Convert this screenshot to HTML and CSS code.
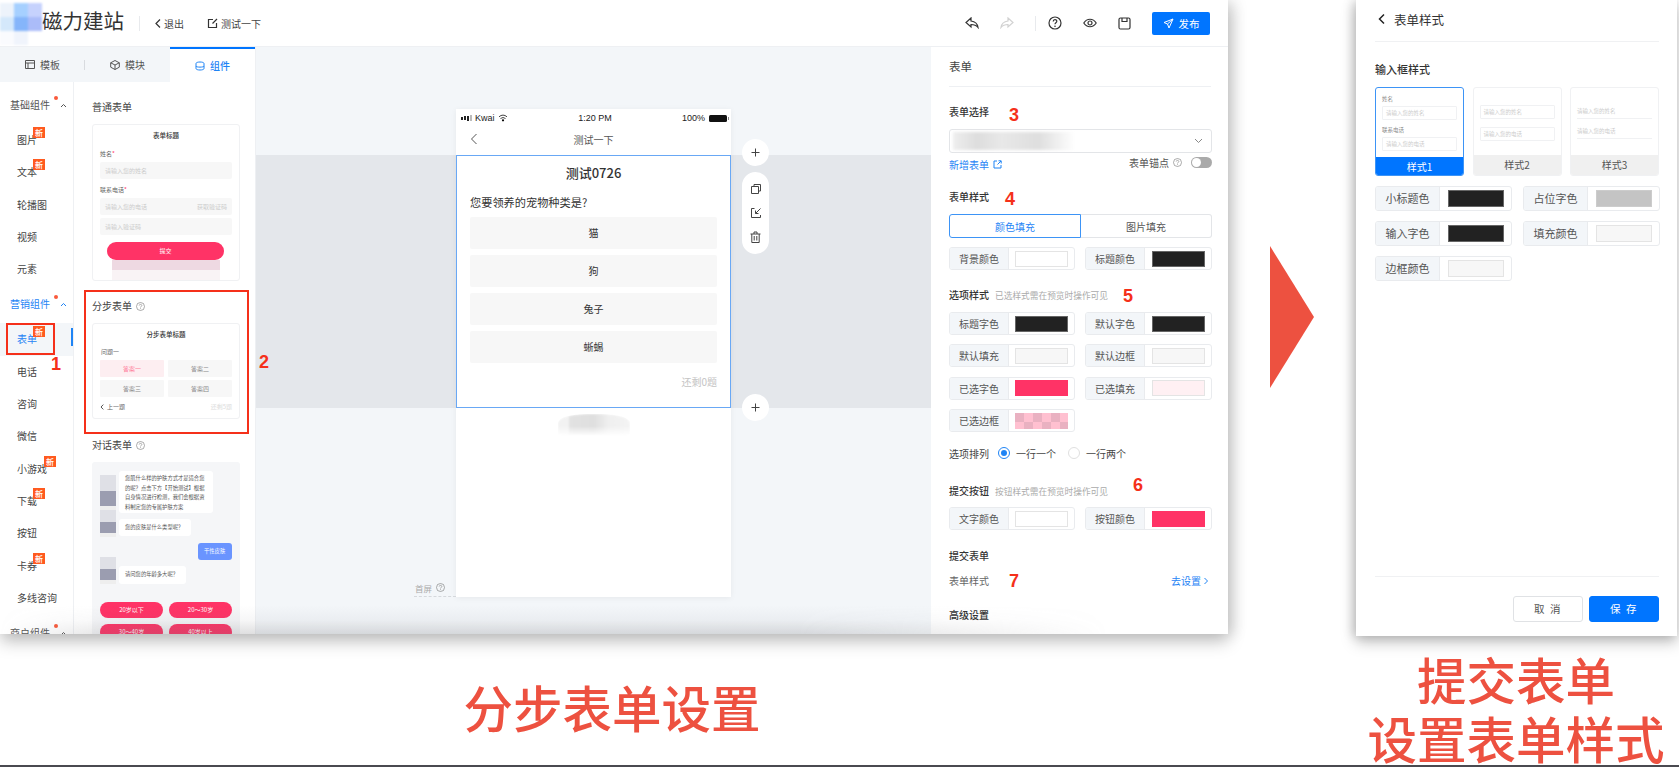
FILE: index.html
```html
<!DOCTYPE html>
<html lang="zh-CN">
<head>
<meta charset="utf-8">
<title>磁力建站</title>
<link rel="stylesheet" href="styles.css">
</head>
<body>
<div class="page">
  <section class="window editor">
    <header class="topbar">
      <div class="logo"><i></i><i></i><i></i><i></i><i></i><i></i><i></i><i></i><i></i></div>
      <span class="brand">磁力建站</span>
      <span class="top-divider"></span>
      <span class="top-link"><svg width="8" height="11" viewBox="0 0 8 11"><path d="M6 1.500 2 5.500l4 4" class="ln"/></svg>退出</span>
      <span class="top-link second"><svg width="11" height="11" viewBox="0 0 11 11"><path d="M6 1.500H1.500v8h8V5M5.500 5.500 10 1" class="ln"/></svg>测试一下</span>
      <div class="top-actions">
        <svg class="act" width="14" height="12" viewBox="0 0 14 12"><path d="M6 1 1 5.500 6 10V7.500c3 0 5 .5 7 3-.5-4-3-6-7-6.500z" class="ln"/></svg>
        <svg class="act faded" width="14" height="12" viewBox="0 0 14 12"><path d="M8 1l5 4.500L8 10V7.500c-3 0-5 .5-7 3 .5-4 3-6 7-6.500z" class="ln"/></svg>
        <span class="top-divider act-div"></span>
        <svg class="act" width="14" height="14" viewBox="0 0 14 14"><circle cx="7" cy="7" r="6" class="ln"/><path d="M5.200 5.500C5.200 3 8.800 3 8.800 5.300 8.800 6.800 7 6.800 7 8.300" class="ln"/><circle cx="7" cy="10.300" r=".8" fill="#333"/></svg>
        <svg class="act" width="14" height="10" viewBox="0 0 14 10"><path d="M.8 5C4 0 10 0 13.200 5 10 10 4 10 .8 5z" class="ln"/><circle cx="7" cy="5" r="2" class="ln"/></svg>
        <svg class="act" width="13" height="13" viewBox="0 0 13 13"><path d="M1 2.500Q1 1 2.500 1h8Q12 1 12 2.500v8q0 1.500-1.500 1.500h-8Q1 12 1 10.500zM4 1v3.500h5V1" class="ln"/></svg>
        <span class="publish"><svg width="11" height="11" viewBox="0 0 11 11"><path d="M10 1 1 4.500l3.500 1.500L6 10zM4.500 6 10 1" class="ln-w"/></svg>发布</span>
      </div>
    </header>
    <div class="editor-body">
      <aside class="library">
        <div class="tabs">
          <div class="tab"><svg width="10" height="9" viewBox="0 0 10 9"><path d="M.5.500h9v8h-9zM.5 3h9M3 3v5.500" class="ln-thin"/></svg>模板<span class="tab-sep"></span></div>
          <div class="tab"><svg width="10" height="10" viewBox="0 0 10 10"><path d="M5 .5 9.300 2.800v4.400L5 9.500.7 7.200V2.800zM.7 2.800 5 5l4.300-2.200M5 5v4.500" class="ln-thin"/></svg>模块</div>
          <div class="tab active"><svg width="10" height="10" viewBox="0 0 10 10"><path d="M1 2.500C1 .5 9 .5 9 2.500v5c0 2-8 2-8 0zM1 5c0 1.500 8 1.500 8 0" class="ln-blue"/></svg>组件</div>
        </div>
        <div class="library-body">
          <nav class="sidenav">
            <div class="nav-head">基础组件<i class="dot"></i><svg class="chev" width="7" height="5" viewBox="0 0 7 5"><path d="M1 4l2.500-2.500L6 4" class="ln-thin"/></svg></div>
            <div class="nav-item">图片<b class="new">新</b></div>
            <div class="nav-item">文本<b class="new">新</b></div>
            <div class="nav-item">轮播图</div>
            <div class="nav-item">视频</div>
            <div class="nav-item">元素</div>
            <div class="nav-head blue">营销组件<i class="dot"></i><svg class="chev" width="7" height="5" viewBox="0 0 7 5"><path d="M1 4l2.500-2.500L6 4" class="ln-blue"/></svg></div>
            <div class="nav-item current">表单<b class="new">新</b></div>
            <div class="nav-item">电话</div>
            <div class="nav-item">咨询</div>
            <div class="nav-item">微信</div>
            <div class="nav-item">小游戏<b class="new far">新</b></div>
            <div class="nav-item">下载<b class="new">新</b></div>
            <div class="nav-item">按钮</div>
            <div class="nav-item">卡券<b class="new">新</b></div>
            <div class="nav-item">多线咨询</div>
            <div class="nav-head last">商户组件<i class="dot"></i><svg class="chev" width="7" height="5" viewBox="0 0 7 5"><path d="M1 4l2.500-2.500L6 4" class="ln-thin"/></svg></div>
          </nav>
          <div class="gallery">
            <h4 class="g-title">普通表单</h4>
            <div class="tpl tpl-plain">
              <div class="tpl-head">表单标题</div>
              <div class="t-label">姓名<em>*</em></div>
              <div class="t-input">请输入您的姓名</div>
              <div class="t-label second">联系电话<em>*</em></div>
              <div class="t-input split"><span>请输入您的电话</span><span>获取验证码</span></div>
              <div class="t-input third">请输入验证码</div>
              <div class="t-submit">提交</div>
              <div class="t-blur"></div>
            </div>
            <h4 class="g-title gap">分步表单<svg class="q" width="9" height="9" viewBox="0 0 9 9"><circle cx="4.500" cy="4.500" r="4" class="ln-q"/><path d="M3.200 3.500c0-1.500 2.600-1.500 2.600 0C5.800 4.500 4.500 4.500 4.500 5.500M4.500 6.300v.8" class="ln-q"/></svg></h4>
            <div class="tpl tpl-step">
              <div class="tpl-head">分步表单标题</div>
              <div class="t-label q1">问题一</div>
              <div class="answers">
                <span class="ans on">答案一</span><span class="ans">答案二</span><span class="ans">答案三</span><span class="ans">答案四</span>
              </div>
              <div class="step-foot"><span class="prev"><svg width="4" height="6" viewBox="0 0 4 6"><path d="M3.300 .6 1 3l2.300 2.400" class="ln-thin"/></svg>上一题</span><span class="rest">还剩5题</span></div>
            </div>
            <h4 class="g-title gap2">对话表单<svg class="q" width="9" height="9" viewBox="0 0 9 9"><circle cx="4.500" cy="4.500" r="4" class="ln-q"/><path d="M3.200 3.500c0-1.500 2.600-1.500 2.600 0C5.800 4.500 4.500 4.500 4.500 5.500M4.500 6.300v.8" class="ln-q"/></svg></h4>
            <div class="tpl tpl-chat">
              <div class="chat-row"><i class="ava tall"></i><p class="bubble">您肌什么样的护肤方式才是适合您的呢？点击下方【开始测试】根据自身情况进行检测，我们会根据资料制定您的专属护肤方案</p></div>
              <div class="chat-row r2"><i class="ava"></i><p class="bubble">您的皮肤是什么类型呢？</p></div>
              <div class="chat-row me"><p class="bubble blue-b">干性皮肤</p></div>
              <div class="chat-row r3"><i class="ava"></i><p class="bubble">请问您的年龄多大呢？</p></div>
              <div class="chat-opts"><span>20岁以下</span><span>20～30岁</span><span>30～40岁</span><span>40岁以上</span></div>
            </div>
          </div>
        </div>
      </aside>
      <main class="canvas">
        <div class="phone">
          <div class="status"><span class="st-left"><i class="sig s1"></i><i class="sig s2"></i><i class="sig s3"></i><i class="sig s4"></i><span class="kwai">Kwai</span><svg width="10" height="8" viewBox="0 0 10 8"><path d="M1 2.800Q5-.6 9 2.800M2.500 4.500Q5 2.500 7.500 4.500" class="ln-k"/><circle cx="5" cy="6.300" r="1.100"/></svg></span><span class="st-mid">1:20 PM</span><span class="st-right">100%<i class="batt"></i></span></div>
          <div class="phone-nav"><svg width="8" height="12" viewBox="0 0 8 12"><path d="M6.500 1 1.500 6l5 5" class="ln-thin"/></svg><span>测试一下</span></div>
          <div class="module">
            <div class="m-title">测试0726</div>
            <div class="m-q">您要领养的宠物种类是?</div>
            <div class="m-opt">猫</div>
            <div class="m-opt">狗</div>
            <div class="m-opt">兔子</div>
            <div class="m-opt">蜥蜴</div>
            <div class="m-rest">还剩0题</div>
          </div>
          <div class="foot-blur"></div>
          <span class="fold">首屏<svg width="9" height="9" viewBox="0 0 9 9"><circle cx="4.500" cy="4.500" r="4" class="ln-q"/><path d="M3.200 3.500c0-1.500 2.600-1.500 2.600 0C5.800 4.500 4.500 4.500 4.500 5.500M4.500 6.300v.8" class="ln-q"/></svg></span>
          <span class="round plus-a"><svg width="9" height="9" viewBox="0 0 9 9"><path d="M4.500.5v8M.5 4.500h8" class="ln-k"/></svg></span>
          <div class="tools">
            <svg width="12" height="12" viewBox="0 0 12 12"><path d="M4 3V1.500h6.500V8H9M1.500 3.500H8.500V10.500H1.500z" class="ln-k"/></svg>
            <svg width="12" height="12" viewBox="0 0 12 12"><path d="M4.500 1.500H1.500v9h9V8M10.500 1.500 5.500 6.500M5.500 3.500v3h3" class="ln-k"/></svg>
            <svg width="11" height="12" viewBox="0 0 11 12"><path d="M.5 3h10M4 3V1h3v2M1.800 3v8.500h7.400V3M4.200 5v4.500M6.800 5v4.500" class="ln-k"/></svg>
          </div>
          <span class="round plus-b"><svg width="9" height="9" viewBox="0 0 9 9"><path d="M4.500.5v8M.5 4.500h8" class="ln-k"/></svg></span>
        </div>
      </main>
      <aside class="props">
        <h3 class="p-title">表单</h3>
        <h4 class="p-h h-a">表单选择</h4>
        <div class="select"><i class="sel-blur"></i><svg width="9" height="6" viewBox="0 0 9 6"><path d="M1 1l3.500 3.500L8 1" class="ln-gray"/></svg></div>
        <div class="sel-foot">
          <span class="link">新增表单<svg width="9" height="9" viewBox="0 0 9 9"><path d="M4 1H1v7h7V5M5.500 .8h2.700v2.700M8 1 4.500 4.500" class="ln-blue"/></svg></span>
          <span class="anchor">表单锚点<svg width="9" height="9" viewBox="0 0 9 9"><circle cx="4.500" cy="4.500" r="4" class="ln-q"/><path d="M3.200 3.500c0-1.500 2.600-1.500 2.600 0C5.800 4.500 4.500 4.500 4.500 5.500M4.500 6.300v.8" class="ln-q"/></svg><i class="switch"></i></span>
        </div>
        <h4 class="p-h h-b">表单样式</h4>
        <div class="seg"><span class="seg-on">颜色填充</span><span class="seg-off">图片填充</span></div>
        <div class="cells c-a">
          <div class="cell"><span>背景颜色</span><u><i class="sw white"></i></u></div>
          <div class="cell"><span>标题颜色</span><u><i class="sw black"></i></u></div>
        </div>
        <h4 class="p-h h-c">选项样式<small>已选样式需在预览时操作可见</small></h4>
        <div class="cells">
          <div class="cell"><span>标题字色</span><u><i class="sw black"></i></u></div>
          <div class="cell"><span>默认字色</span><u><i class="sw black"></i></u></div>
          <div class="cell"><span>默认填充</span><u><i class="sw light"></i></u></div>
          <div class="cell"><span>默认边框</span><u><i class="sw light"></i></u></div>
          <div class="cell"><span>已选字色</span><u><i class="sw pink"></i></u></div>
          <div class="cell"><span>已选填充</span><u><i class="sw blush"></i></u></div>
          <div class="cell"><span>已选边框</span><u><i class="sw check"></i></u></div>
        </div>
        <div class="arrange">
          <span class="arr-label">选项排列</span>
          <i class="radio on"></i><span>一行一个</span>
          <i class="radio"></i><span>一行两个</span>
        </div>
        <h4 class="p-h h-d">提交按钮<small>按钮样式需在预览时操作可见</small></h4>
        <div class="cells">
          <div class="cell"><span>文字颜色</span><u><i class="sw white"></i></u></div>
          <div class="cell"><span>按钮颜色</span><u><i class="sw pink"></i></u></div>
        </div>
        <h4 class="p-h h-e">提交表单</h4>
        <div class="goto"><span>表单样式</span><span class="link">去设置<svg width="6" height="8" viewBox="0 0 6 8"><path d="M1.500 1l3 3-3 3" class="ln-blue"/></svg></span></div>
        <h4 class="p-h h-f">高级设置</h4>
      </aside>
    </div>
    <div class="bottom-fade"></div>
    <b class="mark m1">1</b><b class="mark m2">2</b><b class="mark m3">3</b><b class="mark m4">4</b><b class="mark m5">5</b><b class="mark m6">6</b><b class="mark m7">7</b>
    <i class="redbox box-a"></i><i class="redbox box-b"></i>
  </section>

  <div class="arrow"></div>

  <section class="window drawer">
    <div class="d-head"><svg width="9" height="12" viewBox="0 0 9 12"><path d="M7 1.500 2.500 6 7 10.500" class="ln-dark"/></svg>表单样式</div>
    <h4 class="d-h">输入框样式</h4>
    <div class="styles">
      <div class="style selected">
        <div class="style-pv">
          <span class="s-label">姓名</span><span class="s-input">请输入您的姓名</span>
          <span class="s-label">联系电话</span><span class="s-input">请输入您的电话</span>
        </div>
        <div class="style-name">样式1</div>
      </div>
      <div class="style">
        <div class="style-pv pv2"><span class="s-input">请输入您的姓名</span><span class="s-input">请输入您的电话</span></div>
        <div class="style-name">样式2</div>
      </div>
      <div class="style">
        <div class="style-pv pv3"><span class="s-line">请输入您的姓名</span><span class="s-line">请输入您的电话</span></div>
        <div class="style-name">样式3</div>
      </div>
    </div>
    <div class="d-cells">
      <div class="cell"><span>小标题色</span><u><i class="sw black"></i></u></div>
      <div class="cell"><span>占位字色</span><u><i class="sw grey"></i></u></div>
      <div class="cell"><span>输入字色</span><u><i class="sw black"></i></u></div>
      <div class="cell"><span>填充颜色</span><u><i class="sw light"></i></u></div>
      <div class="cell"><span>边框颜色</span><u><i class="sw light"></i></u></div>
    </div>
    <div class="d-foot">
      <span class="btn">取 消</span><span class="btn primary">保 存</span>
    </div>
  </section>

  <div class="caption">分步表单设置</div>
  <div class="caption-gap"></div>
  <div class="caption two">提交表单<br>设置表单样式</div>
</div>
</body>
</html>
```
FILE: styles.css
```css
* { box-sizing: border-box; }
html, body { margin: 0; padding: 0; background: #fff; }
body { font-family: "Noto Sans CJK SC", "Noto Sans", sans-serif; color: #333; overflow: hidden; }
i, u, em, small { font-style: normal; text-decoration: none; }
h3, h4, p { margin: 0; font-weight: 500; }

.page { display: grid; grid-template-columns: 1228px 128px 321px; grid-template-rows: 634px 131px; width: 1679px; height: 767px; border-bottom: 2px solid #4a4a50; overflow: hidden; }

.ln { fill: none; stroke: #333; stroke-width: 1.200; }
.ln-w { fill: none; stroke: #fff; stroke-width: 1; }
.ln-thin { fill: none; stroke: #555; stroke-width: 1; }
.ln-blue { fill: none; stroke: #1f84f5; stroke-width: 1; }
.ln-q { fill: none; stroke: #888; stroke-width: .7; }
.ln-k { fill: none; stroke: #444; stroke-width: 1; }
.ln-gray { fill: none; stroke: #888; stroke-width: 1; }
.ln-dark { fill: none; stroke: #222; stroke-width: 1.500; }

.window { background: #fff; position: relative; }
.editor { height: 634px; overflow: visible; box-shadow: 0 8px 16px rgba(0,0,0,.22), 6px 0 14px rgba(0,0,0,.12); z-index: 1; display: flex; flex-direction: column; }

/* top bar */
.topbar { height: 47px; flex: none; display: flex; align-items: center; border-bottom: 1px solid #eef0f3; }
.logo { display: grid; grid-template-columns: repeat(3, 14px); grid-auto-rows: 14px; width: 42px; filter: blur(1px); margin-top: 2px; }
.logo i:nth-child(1) { background: #edf3fb; }
.logo i:nth-child(2) { background: #a6d0ff; }
.logo i:nth-child(3) { background: #c6d2fd; }
.logo i:nth-child(4) { background: #d4e8fb; }
.logo i:nth-child(5) { background: #85b5fa; }
.logo i:nth-child(6) { background: #abbcf9; }
.logo i:nth-child(7) { background: #fafbfe; }
.logo i:nth-child(8) { background: #f0f4fc; }
.logo i:nth-child(9) { background: #fff; }
.brand { font-size: 20.500px; line-height: 28px; color: #333; width: 82px; white-space: nowrap; margin-top: -6px; }
.top-divider { width: 1px; height: 15px; background: #e8eaed; margin-left: 15px; }
.top-link { display: flex; align-items: center; gap: 2px; font-size: 10px; color: #444; margin-left: 14px; }
.top-link.second { margin-left: 23px; gap: 3px; }
.top-actions { display: flex; align-items: center; margin-left: auto; margin-right: 18px; }
.act { margin-right: 21px; }
.act.faded { opacity: .22; }
.act-div { margin: 0 12px 0 0; }
.publish { display: flex; align-items: center; justify-content: center; gap: 5px; width: 58px; height: 23px; margin-left: 0; background: #0075ff; color: #fff; font-size: 10.500px; border-radius: 2px; }

/* body */
.editor-body { display: flex; flex: none; height: 587px; overflow: hidden; }
.library { width: 256px; flex: none; display: flex; flex-direction: column; border-right: 1px solid #eef0f3; }
.tabs { display: flex; height: 35px; flex: none; background: #f3f6f9; }
.tab { position: relative; width: 85.500px; display: flex; align-items: center; justify-content: center; gap: 5px; font-size: 10px; color: #555; }
.tab.active { background: #fff; color: #1f84f5; border-top: 2px solid #0075ff; font-weight: 500; }
.tab-sep { position: absolute; right: 0; top: 13px; height: 10px; width: 1px; background: #d8dbdf; }
.library-body { display: flex; flex: 1; min-height: 0; }

.sidenav { width: 74px; flex: none; border-right: 1px solid #eef0f3; font-size: 10px; color: #444; padding-top: 15px; }
.nav-head { position: relative; height: 16px; line-height: 16px; padding-left: 10px; margin-bottom: 11px; white-space: nowrap; color: #555; }
.nav-head.blue { color: #1f84f5; margin-top: 11px; margin-bottom: 11px; }
.nav-head.last { margin-top: 11px; }
.dot { position: absolute; left: 54px; top: -1px; width: 4px; height: 4px; border-radius: 50%; background: #fa5a3c; }
.chev { position: absolute; left: 60px; top: 6px; }
.nav-item { position: relative; height: 32.300px; line-height: 32.300px; padding-left: 17px; white-space: nowrap; }
.nav-item.current { color: #1f84f5; background: #f3f6f9; }
.nav-item.current::after { content: ""; position: absolute; right: 0; top: 5px; width: 2px; height: 18px; background: #1f84f5; }
.new { position: absolute; left: 33px; top: 3px; width: 12px; height: 11px; background: #ff5a1f; color: #fff; font-size: 8px; line-height: 11px; text-align: center; font-weight: 500; }
.new.far { left: 44px; }

.gallery { flex: 1; padding: 18px 16px 0 18px; overflow: hidden; }
.g-title { font-size: 10px; line-height: 14px; height: 14px; color: #444; font-weight: 400; margin-bottom: 10px; display: flex; align-items: center; gap: 4px; }
.g-title.gap { margin-top: 18px; }
.g-title.gap2 { margin-top: 19px; }
.tpl { border: 1px solid #f0f1f3; border-radius: 3px; padding: 0 7px; font-size: 6px; color: #888; position: relative; overflow: hidden; width: 148px; }
.tpl-head { text-align: center; color: #333; font-size: 6.500px; line-height: 8px; padding-top: 6px; font-weight: 500; box-sizing: content-box; }
.tpl-plain { height: 157px; }
.t-label { margin-top: 11px; line-height: 8px; height: 8px; color: #666; margin-bottom: 4px; }
.t-label em { color: #ff3366; }
.t-label.second { margin-top: 7px; }
.t-input { height: 17px; line-height: 17px; padding: 0 5px; background: #f7f7f7; color: #ccc; border-radius: 2px; }
.t-input.split { display: flex; justify-content: space-between; }
.t-input.third { margin-top: 3px; }
.t-submit { width: 117px; height: 18px; margin: 7px 0 0 7px; border-radius: 9px; background: #ff3366; color: #fff; text-align: center; line-height: 18px; }
.t-blur { height: 20px; margin: 0 12px; background: linear-gradient(#eed9e2 50%, #f9f3f5 50%); filter: blur(.6px); }
.tpl-step { height: 96px; }
.t-label.q1 { margin: 10px 0 4px 1px; }
.answers { display: grid; grid-template-columns: 64px 64px; grid-auto-rows: 17px; gap: 3px 4px; }
.ans { background: #f7f7f7; text-align: center; line-height: 17px; color: #888; border-radius: 1px; }
.ans.on { background: #fdeef1; color: #ff7a98; }
.step-foot { display: flex; justify-content: space-between; margin-top: 6px; line-height: 8px; color: #666; }
.prev { display: flex; align-items: center; gap: 3px; }
.rest { color: #ddd; }
.tpl-chat { border: 0; background: #f5f6f8; height: 190px; padding: 9px 8px 0; color: #555; }
.chat-row { display: flex; gap: 3px; }
.ava { width: 16px; height: 27px; margin-top: 4px; flex: none; background: linear-gradient(#dfe0e6 45%, #9b9db0 45%, #9b9db0 85%, #eee 85%); filter: blur(.3px); }
.ava.tall { height: 36px; }
.bubble { background: #fff; border-radius: 3px; padding: 3px 6px; font-size: 5.300px; line-height: 9.500px; font-weight: 400; color: #555; }
.chat-row:first-child .bubble { width: 94px; height: 42px; }
.r2 { margin-top: 6px; height: 17px; }
.r2 .bubble { height: 17px; width: 72px; white-space: nowrap; padding-top: 4px; }
.r2 .ava, .r3 .ava { margin-top: -9px; }
.me { justify-content: flex-end; margin-top: 7px; height: 17px; }
.blue-b { background: #6a94ff; color: #fff; width: 34px; height: 17px; white-space: nowrap; padding: 4px 6px; }
.r3 { margin-top: 6px; height: 18px; }
.r3 .bubble { height: 18px; width: 67px; white-space: nowrap; padding-top: 4px; }
.chat-opts { display: grid; grid-template-columns: 63px 63px; gap: 6px; margin-top: 18px; }
.chat-opts span { height: 16px; line-height: 16px; border-radius: 8px; background: #ff3366; color: #fff; text-align: center; }

/* canvas */
.canvas { width: 675px; flex: none; padding-top: 62px; background: linear-gradient(#f3f6f9 108px, #e4e7eb 108px, #e4e7eb 361px, #f3f6f9 361px); }
.phone { position: relative; width: 275px; height: 488px; margin: 0 auto; background: #fff; box-shadow: 0 1px 6px rgba(0,0,0,.06); }
.status { height: 18px; display: flex; justify-content: space-between; align-items: center; padding: 0 2px 0 5px; font-family: "Liberation Sans", sans-serif; font-size: 9px; color: #222; }
.st-left, .st-right { display: flex; align-items: center; width: 100px; }
.st-right { justify-content: flex-end; }
.sig { width: 2px; background: #222; margin-right: 1px; }
.s1 { height: 3px; } .s2 { height: 4px; } .s3 { height: 5px; } .s4 { height: 6px; background: #bbb; }
.kwai { margin: 0 3px 0 2px; }
.batt { position: relative; width: 18px; height: 7px; background: #111; border-radius: 1.500px; margin: 0 2px 0 4px; }
.batt::after { content: ""; position: absolute; right: -2px; top: 2px; width: 1.500px; height: 3px; background: #888; }
.phone-nav { height: 28px; display: flex; align-items: center; position: relative; padding: 0 0 4px 14px; font-size: 10px; color: #555; }
.phone-nav span { position: absolute; left: 0; right: 0; text-align: center; }
.module { height: 253px; margin-top: 0; border: 1px solid #69a8f5; padding: 0 13px; }
.m-title { font-size: 13px; line-height: 18px; text-align: center; color: #333; font-weight: 500; padding-top: 8px; height: 26px; box-sizing: content-box; }
.m-q { font-size: 11.200px; line-height: 16px; color: #333; margin-top: 3px; margin-bottom: 7px; white-space: nowrap; padding-top: 1px; }
.m-opt { height: 32px; line-height: 32px; background: #f7f7f7; border-radius: 2px; text-align: center; font-size: 10px; color: #333; margin-bottom: 6px; }
.m-rest { text-align: right; font-size: 10px; color: #c4c4c4; line-height: 14px; margin-top: 12px; }
.foot-blur { width: 72px; height: 22px; margin: 6px auto 0; background: linear-gradient(90deg, #f2f2f2 15%, #e2e2e2 15%, #dfdfdf 50%, #efefef 70%, #f4f4f4); border-radius: 40% 40% 10% 10%; filter: blur(1px); -webkit-mask-image: linear-gradient(#000 55%, transparent); mask-image: linear-gradient(#000 55%, transparent); }
.fold { position: absolute; left: -42px; bottom: 0; width: 42px; height: 18px; padding-left: 1px; display: flex; align-items: center; gap: 4px; font-size: 8.500px; color: #aaa; border-bottom: 1px dashed #d5d8dc; }
.round { position: absolute; left: 286px; width: 27px; height: 27px; border-radius: 50%; background: #fff; display: flex; align-items: center; justify-content: center; }
.plus-a { top: 30px; }
.plus-b { top: 285px; }
.tools { position: absolute; left: 286px; top: 63px; width: 27px; height: 82px; border-radius: 14px; background: #fff; display: flex; flex-direction: column; align-items: center; gap: 12px; padding-top: 11px; }

/* properties */
.props { width: 297px; flex: none; padding: 11px 16px 0 18px; background: #fff; overflow: hidden; }
.p-title { font-size: 11.500px; line-height: 16px; height: 29px; border-bottom: 1px solid #eef0f3; font-weight: 400; color: #444; width: 262px; }
.p-h { font-size: 10px; line-height: 14px; height: 14px; font-weight: 500; color: #333; white-space: nowrap; }
.p-h small { font-size: 8.700px; font-weight: 400; color: #aaa; margin-left: 6px; }
.h-a { margin-top: 18px; margin-bottom: 10px; }
.h-b { margin-top: 19px; margin-bottom: 10px; }
.h-c { margin-top: 18px; margin-bottom: 10px; }
.h-d { margin-top: 24px; margin-bottom: 9px; }
.h-e { margin-top: 19px; }
.h-f { margin-top: 20px; }
.select { height: 24px; border: 1px solid #e3e5e8; border-radius: 3px; display: flex; align-items: center; justify-content: space-between; padding: 0 8px 0 3px; }
.sel-blur { width: 122px; height: 18px; background: linear-gradient(90deg, #eee, #ddd 20%, #e8e8e8 40%, #dedede 70%, #f4f4f4 90%, #fff); filter: blur(1.500px); }
.sel-foot { display: flex; justify-content: space-between; align-items: center; height: 14px; margin-top: 4px; font-size: 10px; }
.link { color: #1f84f5; display: flex; align-items: center; gap: 4px; }
.anchor { display: flex; align-items: center; color: #555; margin-top: -3px; }
.anchor svg { margin-left: 4px; }
.switch { position: relative; width: 21px; height: 11px; border-radius: 6px; background: #aaa; margin-left: 9px; }
.switch::after { content: ""; position: absolute; left: 1px; top: 1px; width: 9px; height: 9px; border-radius: 50%; background: #fff; }
.seg { display: flex; height: 24px; font-size: 10px; text-align: center; line-height: 23px; }
.seg-on { width: 132px; border: 1px solid #3d94f6; border-radius: 3px 0 0 3px; color: #1f84f5; }
.seg-off { flex: 1; border: 1px solid #e3e5e8; border-left: 0; border-radius: 0 3px 3px 0; color: #555; }
.cells { display: grid; grid-template-columns: 126px 127px; grid-auto-rows: 23px; gap: 9.400px 10px; }
.c-a { margin-top: 9px; }
.cell { display: flex; border: 1px solid #e9ebee; border-radius: 3px; overflow: hidden; font-size: 10px; }
.cell > span { width: 59px; flex: none; background: #f3f6f9; border-right: 1px solid #e9ebee; text-align: center; line-height: 21px; color: #555; white-space: nowrap; }
.cell > u { flex: 1; display: flex; align-items: center; justify-content: center; }
.sw { width: 53px; height: 16px; border: 1px solid #e4e4e4; }
.sw.black { background: #222; border-color: #666; }
.sw.white { background: #fff; }
.sw.light { background: #f7f7f7; }
.sw.pink { background: #ff3366; border-color: #ff3366; }
.sw.blush { background: #fff0f3; }
.sw.grey { background: #c4c4c4; border-color: #ccc; }
.sw.check { border: 0; background: conic-gradient(#ffc0d0 25%, #e9b1c1 0 50%, #ffc0d0 0 75%, #e9b1c1 0) 0 0 / 18px 18px; }
.arrange { display: flex; align-items: center; height: 14px; margin-top: 14px; font-size: 10px; color: #444; white-space: nowrap; }
.arr-label { width: 49px; }
.radio { width: 12px; height: 12px; border-radius: 50%; border: 1px solid #e0e0e0; margin-right: 6px; position: relative; }
.radio.on { border-color: #1f84f5; }
.radio.on::after { content: ""; position: absolute; inset: 2px; border-radius: 50%; background: #1f84f5; }
.radio + span + .radio { margin-left: 12px; }
.goto { display: flex; justify-content: space-between; height: 14px; line-height: 14px; margin-top: 11px; font-size: 10px; color: #666; padding-right: 3px; }
.goto .link { gap: 2px; }

.bottom-fade { position: absolute; left: 0; right: 120px; top: 606px; height: 28px; background: linear-gradient(rgba(110,110,115,0), rgba(110,110,115,.06) 50%, rgba(110,110,115,.22)); -webkit-mask-image: linear-gradient(90deg, transparent, #000 12%, #000 72%, transparent); mask-image: linear-gradient(90deg, transparent, #000 12%, #000 72%, transparent); pointer-events: none; }

.mark { position: absolute; color: #f5301a; font: 700 18px/18px "Liberation Sans", sans-serif; }
.m1 { left: 51px; top: 355px; }
.m2 { left: 259px; top: 353px; }
.m3 { left: 1009px; top: 106px; }
.m4 { left: 1005px; top: 190px; }
.m5 { left: 1123px; top: 287px; }
.m6 { left: 1133px; top: 476px; }
.m7 { left: 1009px; top: 572px; }
.redbox { position: absolute; border: 2px solid #f5301a; }
.box-a { left: 6px; top: 323px; width: 49px; height: 32px; }
.box-b { left: 84px; top: 290px; width: 165px; height: 144px; }

.arrow { width: 44px; height: 142px; margin: 246px 0 0 42px; background: #ed5140; clip-path: polygon(0 0, 100% 50%, 0 100%); }

/* drawer */
.drawer { height: 636px; width: 321px; padding: 0 18px 0 19px; box-shadow: 0 6px 14px rgba(0,0,0,.25), -3px 0 10px rgba(0,0,0,.15); display: flex; flex-direction: column; z-index: 1; }
.d-head { height: 42px; display: flex; align-items: center; gap: 8px; border-bottom: 1px solid #f0f1f3; font-size: 12.500px; color: #333; padding: 0 0 3px 2px; width: 284px; }
.d-h { font-size: 11px; line-height: 16px; color: #333; margin-top: 19px; }
.styles { display: grid; grid-template-columns: repeat(3, 89px); gap: 8.500px; margin-top: 10px; width: 284px; }
.style { height: 89px; border: 1px solid #f0f1f3; border-radius: 3px; overflow: hidden; display: flex; flex-direction: column; }
.style-pv { flex: 1; padding: 7px 6px 0; display: flex; flex-direction: column; font-size: 5.500px; color: #888; }
.pv2 { padding-top: 17px; gap: 8px; }
.pv3 { padding-top: 18px; gap: 7px; }
.s-label { line-height: 8px; height: 8px; margin-bottom: 3px; }
.s-input { height: 14px; line-height: 12px; border: 1px solid #f0f1f3; color: #ccc; padding: 0 3px; margin-bottom: 6px; white-space: nowrap; border-radius: 1px; }
.pv2 .s-input { margin: 0; }
.s-line { height: 13px; line-height: 11px; border-bottom: 1px solid #f0f1f3; color: #ccc; }
.style-name { height: 20px; line-height: 20px; background: #f0f0f0; font-size: 10px; text-align: center; color: #555; flex: none; }
.style.selected { border-color: #3d94f6; }
.selected .style-name { background: #0075ff; color: #fff; }
.d-cells { display: grid; grid-template-columns: 137px 137px; grid-auto-rows: 25px; gap: 10px 11px; margin-top: 10px; }
.d-cells .cell { font-size: 11px; }
.d-cells .cell > span { width: 64px; line-height: 23px; }
.d-cells .sw { width: 56px; height: 17px; }
.d-foot { margin-top: auto; width: 284px; height: 61px; margin-bottom: -1px; border-top: 1px solid #f0f1f3; display: flex; justify-content: flex-end; gap: 6px; padding-top: 19px; }
.btn { width: 70px; height: 26px; border: 1px solid #e0e2e5; border-radius: 3px; text-align: center; line-height: 24px; font-size: 10.500px; letter-spacing: 1.500px; color: #555; }
.btn.primary { background: #0075ff; border-color: #0075ff; color: #fff; }

.caption { color: #ed5140; font-size: 49.500px; font-weight: 500; line-height: 59px; text-align: center; padding: 43px 4px 0 0; white-space: nowrap; }
.caption.two { padding: 15px 0 0; margin-left: -1px; }
```
